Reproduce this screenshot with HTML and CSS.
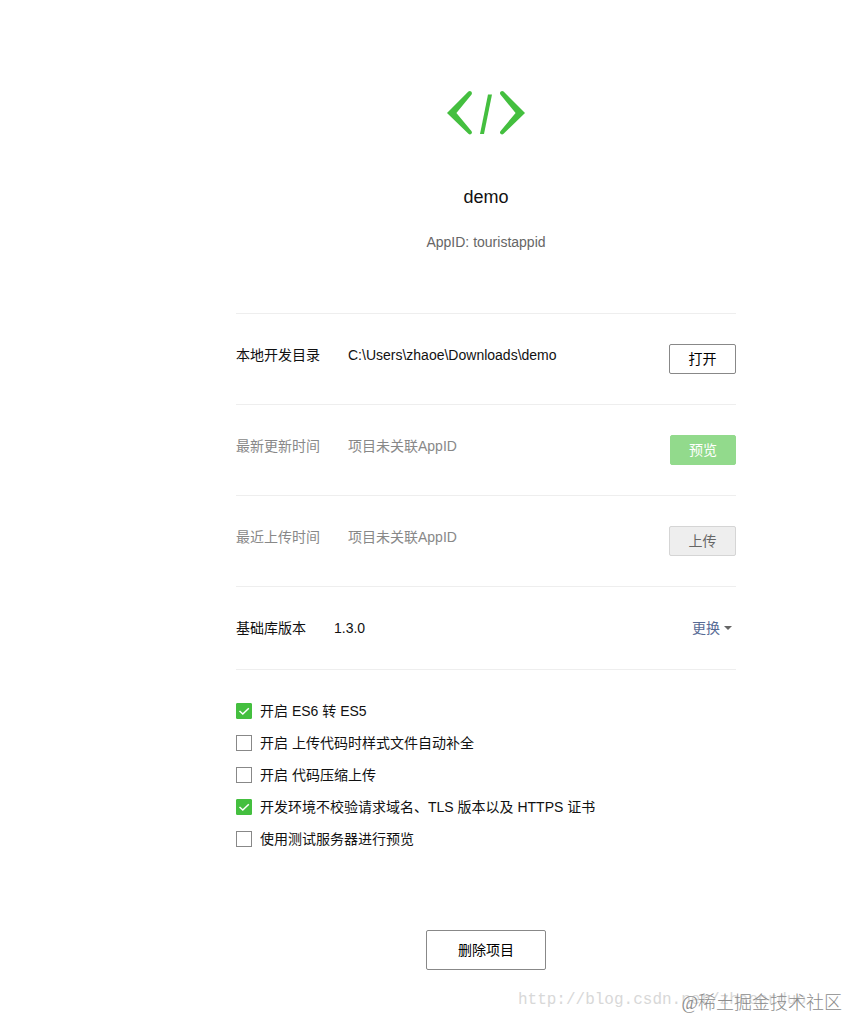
FILE: index.html
```html
<!DOCTYPE html>
<html lang="zh-CN">
<head>
    <meta charset="UTF-8">
    <meta name="viewport" content="width=device-width, initial-scale=1.0">
    <title>demo</title>
    <link rel="stylesheet" href="styles.css">
</head>
<body>
    <main class="project">
        <header class="project-header">
            <svg class="logo" viewBox="0 0 80 46" width="80" height="46" aria-hidden="true">
                <path d="M22.4 1.6 Q23.8 0.4 25.2 1.6 Q26.6 3 25.6 4.4 L10.4 23 L25.6 41.2 Q26.6 42.8 25.2 44 Q23.8 45 22.4 43.8 L1 23 Z"/>
                <path d="M42 4.5 H46 L38 44 H34 Z"/>
                <path d="M57.6 1.6 Q56.2 0.4 54.8 1.6 Q53.4 3 54.4 4.4 L69.6 23 L54.4 41.2 Q53.4 42.8 54.8 44 Q56.2 45 57.6 43.8 L79 23 Z"/>
            </svg>
            <h1>demo</h1>
            <p>AppID: touristappid</p>
        </header>

        <section class="info">
            <div class="row">
                <span>本地开发目录</span>
                <span>C:\Users\zhaoe\Downloads\demo</span>
                <button type="button" class="btn">打开</button>
            </div>
            <div class="row muted">
                <span>最新更新时间</span>
                <span>项目未关联AppID</span>
                <button type="button" class="btn btn-primary" disabled>预览</button>
            </div>
            <div class="row muted">
                <span>最近上传时间</span>
                <span>项目未关联AppID</span>
                <button type="button" class="btn btn-disabled" disabled>上传</button>
            </div>
            <div class="row">
                <label for="version">基础库版本</label>
                <span>1.3.0</span>
                <div class="change">
                    <select id="version">
                        <option>更换</option>
                    </select>
                    <svg class="caret" viewBox="0 0 8 4" width="8" height="4" aria-hidden="true"><path d="M0 0 H8 L4 4 Z"/></svg>
                </div>
            </div>
        </section>

        <section class="options">
            <label><input type="checkbox" checked>开启 ES6 转 ES5</label>
            <label><input type="checkbox">开启 上传代码时样式文件自动补全</label>
            <label><input type="checkbox">开启 代码压缩上传</label>
            <label><input type="checkbox" checked>开发环境不校验请求域名、TLS 版本以及 HTTPS 证书</label>
            <label><input type="checkbox">使用测试服务器进行预览</label>
        </section>

        <button type="button" class="btn btn-delete">删除项目</button>
    </main>

    <div class="watermark watermark-url">http://blog.csdn.net/zhaoerduo</div>
    <div class="watermark watermark-site">@稀土掘金技术社区</div>
</body>
</html>
```

FILE: styles.css
```css
:root {
    --green: #44bf3f;
    --line: #eeeeee;
    --link: #576b95;
}
* {
    box-sizing: border-box;
}
body {
    position: relative;
    min-height: 100vh;
    margin: 0;
    padding: 90px 0 49px 124px;
    background: #fff;
    color: #111;
    font-family: "Liberation Sans", Arial, "Noto Sans CJK SC", sans-serif;
    font-size: 14px;
    line-height: 22px;
}
.project {
    display: flex;
    flex-direction: column;
    max-width: 500px;
    margin: 0 auto;
}
.project-header {
    display: flex;
    flex-direction: column;
    align-items: center;
    padding-bottom: 60px;
}
.logo {
    fill: var(--green);
}
h1 {
    margin: 48px 0 0;
    font-size: 18px;
    font-weight: normal;
    line-height: 26px;
}
.project-header p {
    margin: 21px 0 0;
    color: #666;
}
.row {
    display: flex;
    align-items: flex-start;
    gap: 28px;
    padding: 30px 0;
    border-top: 1px solid var(--line);
}
.row:last-child {
    border-bottom: 1px solid var(--line);
}
.muted {
    color: #888;
}
.btn {
    min-width: 67px;
    height: 30px;
    padding: 0 16px;
    border: 1px solid #888;
    border-radius: 2px;
    background: #fff;
    color: #000;
    font: inherit;
}
.row .btn,
.change {
    margin-left: auto;
}
.btn-primary {
    min-width: 66px;
    border-color: #92da8c;
    background: #92da8c;
    color: #fff;
}
.btn-disabled {
    border-color: #d5d5d5;
    background: #eee;
    color: #666;
}
.change {
    display: flex;
    align-items: center;
    gap: 4px;
    padding-right: 4px;
}
.change select {
    appearance: none;
    height: 22px;
    padding: 0;
    border: 0;
    background: none;
    color: var(--link);
    font: inherit;
}
.caret {
    fill: #666;
}
.options {
    display: flex;
    flex-direction: column;
    gap: 10px;
    padding: 30px 0 80px;
}
.options label {
    display: flex;
    align-items: center;
    gap: 8px;
}
.options input {
    appearance: none;
    flex: none;
    width: 16px;
    height: 16px;
    margin: 0;
    border: 1px solid #888;
    background: #fff;
}
.options input:checked {
    border-color: var(--green);
    border-radius: 1px;
    background: var(--green) url("data:image/svg+xml,%3Csvg xmlns='http://www.w3.org/2000/svg' viewBox='0 0 14 14'%3E%3Cpath d='M2.5 7 L5.8 10 L11.8 4.2' fill='none' stroke='white' stroke-width='1.5'/%3E%3C/svg%3E") center / 14px no-repeat;
}
.btn-delete {
    align-self: center;
    width: 120px;
    height: 40px;
}
.watermark {
    position: absolute;
    white-space: nowrap;
    pointer-events: none;
}
.watermark-url {
    right: 42px;
    bottom: 8px;
    color: #d8d8d8;
    font-family: "Liberation Mono", monospace;
    font-size: 16px;
}
.watermark-site {
    right: 6px;
    bottom: 5px;
    color: #8c8c8c;
    font-family: "Liberation Serif", "Noto Sans CJK SC", serif;
    font-size: 18px;
    font-weight: 300;
}
```
